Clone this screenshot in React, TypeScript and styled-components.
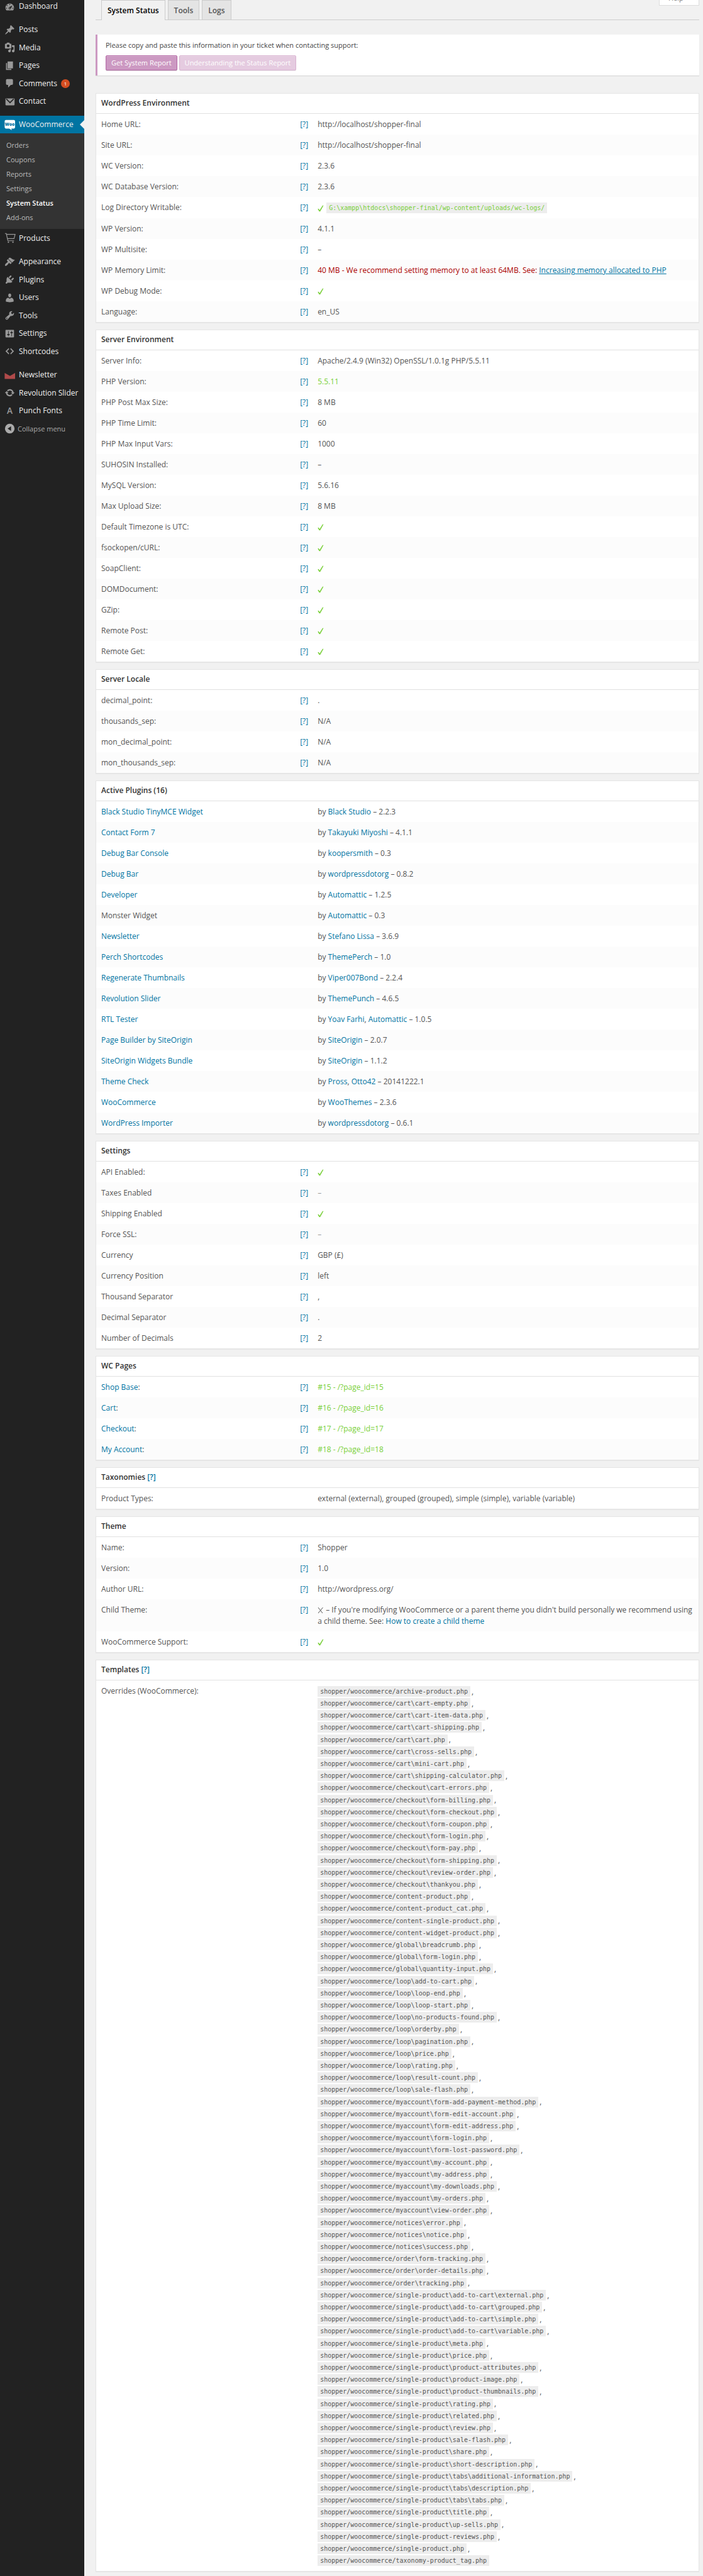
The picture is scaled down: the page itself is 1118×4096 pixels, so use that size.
import React from "react";
import styled, { createGlobalStyle } from "styled-components";

const SANS = '"Open Sans", "Noto Sans", sans-serif';
const MONO = '"DejaVu Sans Mono", "Liberation Mono", monospace';

const GlobalStyle = createGlobalStyle`
  *, *::before, *::after { box-sizing: border-box; }
  body {
    margin: 0;
    background: #f1f1f1;
    color: #444;
    font: 11px/18px ${SANS};
  }
  a { color: #0074a2; text-decoration: none; }
`;

/* ---------- frame ---------- */

const Page = styled.div`
  display: flex;
  align-items: stretch;
  min-height: 100vh;
`;

const Sidebar = styled.nav`
  flex: 0 0 134px;
  background: #222;
  overflow: hidden;
`;

const MenuStack = styled.div`
  display: flex;
  flex-direction: column;
  gap: 9px;
  margin-top: -4px;
`;

const MenuGroup = styled.ul`
  list-style: none;
  margin: 0;
  padding: 0;
`;

const MenuItem = styled.li`
  &:nth-child(even) > a { height: 29px; }
`;

const MenuLink = styled.a<{ $current?: boolean }>`
  position: relative;
  display: flex;
  align-items: center;
  gap: 6px;
  height: 28px;
  padding-left: 7px;
  font-size: 12px;
  line-height: 16px;
  color: #eee;
  background: ${(p) => (p.$current ? "#0074a2" : "transparent")};
  svg { flex: none; overflow: visible; color: ${(p) => (p.$current ? "#fff" : "#999")}; }
`;

const CurrentArrow = styled.span`
  position: absolute;
  right: 0;
  top: 7px;
  border: 7px solid transparent;
  border-left: 0;
  border-right-color: #f1f1f1;
`;

const Bubble = styled.span`
  min-width: 14px;
  height: 14px;
  border-radius: 7px;
  background: #d54e21;
  color: #fff;
  font-size: 8px;
  line-height: 14px;
  text-align: center;
`;

const SubMenu = styled.ul`
  list-style: none;
  margin: 0;
  padding: 7px 0;
  background: #333;
`;

const SubLink = styled.a<{ $current?: boolean }>`
  display: block;
  padding-left: 10px;
  font-size: 11px;
  line-height: 23px;
  color: ${(p) => (p.$current ? "#fff" : "#bbb")};
  font-weight: ${(p) => (p.$current ? 600 : 400)};
`;

const CollapseButton = styled.button`
  display: flex;
  align-items: center;
  gap: 4px;
  width: 100%;
  height: 29px;
  padding: 0 0 0 7px;
  border: 0;
  background: none;
  color: #aaa;
  font: 11px/16px ${SANS};
  cursor: pointer;
`;

const Content = styled.main`
  flex: 1;
  min-width: 0;
  padding: 0 6px 7px 18px;
`;

/* ---------- top of the page ---------- */

const TopBar = styled.header`
  display: flex;
  justify-content: space-between;
  align-items: flex-start;
  height: 32px;
  padding-left: 9px;
  border-bottom: 1px solid #ccc;
`;

const Tabs = styled.div`
  display: flex;
  gap: 4px;
`;

const Tab = styled.a<{ $active?: boolean }>`
  height: ${(p) => (p.$active ? 32 : 31)}px;
  padding: 0 9px;
  border: 1px solid #ccc;
  border-bottom: 0;
  background: ${(p) => (p.$active ? "#f1f1f1" : "#e4e4e4")};
  color: ${(p) => (p.$active ? "#000" : "#555")};
  font-size: 12px;
  font-weight: 600;
  line-height: 31px;
`;

const HelpTab = styled.button`
  display: flex;
  align-items: flex-end;
  width: 64px;
  height: 9px;
  padding: 0 0 4px 14px;
  border: 1px solid #ddd;
  border-top: 0;
  background: #fff;
  color: #777;
  font: 11px/14px ${SANS};
`;

const Notice = styled.section`
  margin: 23px 0 28px;
  padding: 8px 13px;
  border-left: 3px solid #cc99c2;
  background: #fff;
  box-shadow: 0 1px 1px rgba(0, 0, 0, 0.1);
`;

const NoticeText = styled.p`
  margin: 0 0 7px;
`;

const ButtonRow = styled.div`
  display: flex;
  gap: 3px;
`;

const ActionButton = styled.button<{ $faded?: boolean }>`
  height: 24px;
  padding: 0 8px;
  border: 1px solid #b366a4;
  border-radius: 2px;
  background: #cc99c2;
  box-shadow: inset 0 1px 0 rgba(255, 255, 255, 0.25), 0 1px 0 rgba(0, 0, 0, 0.15);
  color: #fff;
  font: 11px/20px ${SANS};
  opacity: ${(p) => (p.$faded ? 0.5 : 1)};
`;

/* ---------- report tables ---------- */

const Report = styled.table`
  width: 100%;
  margin-bottom: 11px;
  table-layout: fixed;
  border: 1px solid #e5e5e5;
  border-collapse: separate;
  border-spacing: 0;
  background: #fff;
  box-shadow: 0 1px 1px rgba(0, 0, 0, 0.04);
  font-size: 12px;
  &:last-child { margin-bottom: 0; }
`;

const LabelCol = styled.col`
  width: 33%;
`;

const HelpCol = styled.col`
  width: 28px;
`;

const Heading = styled.th`
  padding: 6px 8px 7px;
  border-bottom: 1px solid #e1e1e1;
  color: #333;
  font-weight: 600;
  line-height: 18px;
  text-align: left;
`;

const Row = styled.tr`
  &:nth-child(even) { background: #fcfcfc; }
`;

const Cell = styled.td`
  padding: 8px 8px 7px;
  vertical-align: top;
  color: #555;
`;

const Code = styled.code`
  padding: 0 4px;
  background: #ededed;
  font: 10px/17px ${MONO};
`;

const CodeLine = styled.div`
  display: flex;
  align-items: center;
  gap: 4px;
  height: 19px;
`;

const TemplateList = styled.ul`
  list-style: none;
  margin: 0;
  padding: 0;
  li { display: flex; align-items: center; gap: 2px; height: 19px; }
  li:nth-child(5n) { height: 20px; }
`;

const Good = styled.span`
  color: #7ad03a;
`;

const Bad = styled.span`
  color: #a00;
  a { text-decoration: underline; }
`;

const Muted = styled.span`
  color: #999;
`;

const Mark = styled.svg`
  display: inline-block;
  vertical-align: middle;
`;

/* ---------- drawings ---------- */

const ICONS: Record<string, React.ReactNode> = {
  dashboard: (
    <path d="M3.76 17.01h12.48C17.34 15.63 18 13.9 18 12c0-4.41-3.58-8-8-8s-8 3.59-8 8c0 1.9.66 3.63 1.76 5.01zM9 6c0-.55.45-1 1-1s1 .45 1 1c0 .56-.45 1-1 1s-1-.44-1-1zM4 8c0-.55.45-1 1-1s1 .45 1 1c0 .56-.45 1-1 1s-1-.44-1-1zm4.52 3.4c.84-.83 6.51-3.5 6.51-3.5s-2.66 5.68-3.49 6.51c-.84.84-2.18.84-3.02 0-.83-.83-.83-2.18 0-3.01zM3 13c0-.55.45-1 1-1s1 .45 1 1c0 .56-.45 1-1 1s-1-.44-1-1zm6 0c0-.55.45-1 1-1s1 .45 1 1c0 .56-.45 1-1 1s-1-.44-1-1zm6 0c0-.55.45-1 1-1s1 .45 1 1c0 .56-.45 1-1 1s-1-.44-1-1z" />
  ),
  post: (
    <path d="M10.44 3.02l1.82-1.82 6.36 6.35-1.83 1.82c-1.05-.68-2.48-.57-3.41.36l-.75.75c-.92.93-1.04 2.35-.35 3.41l-1.83 1.82-2.41-2.41-2.8 2.79c-.42.42-3.38 2.71-3.8 2.29s1.86-3.39 2.28-3.81l2.79-2.79L4.1 9.36l1.83-1.82c1.05.69 2.48.57 3.4-.36l.75-.75c.93-.92 1.05-2.35.36-3.41z" />
  ),
  media: (
    <path
      fillRule="evenodd"
      d="M13 11V4c0-.55-.45-1-1-1h-1.67L9 1H5L3.67 3H2c-.55 0-1 .45-1 1v7c0 .55.45 1 1 1h10c.55 0 1-.45 1-1zM7 4.5c1.38 0 2.5 1.12 2.5 2.5S8.38 9.5 7 9.5 4.5 8.38 4.5 7 5.62 4.5 7 4.5zM14 6h5v10.5c0 1.38-1.12 2.5-2.5 2.5S14 17.88 14 16.5s1.12-2.5 2.5-2.5c.17 0 .34.02.5.05V9h-3V6zm-4 8.05V13h2v3.5c0 1.38-1.12 2.5-2.5 2.5S7 17.88 7 16.5 8.12 14 9.5 14c.17 0 .34.02.5.05z"
    />
  ),
  page: <path d="M6 15V2h10v13H6zm-1 1h8v2H3V5h2v11z" />,
  comments: (
    <path d="M5 2h9c1.1 0 2 .9 2 2v7c0 1.1-.9 2-2 2h-2l-5 5v-5H5c-1.1 0-2-.9-2-2V4c0-1.1.9-2 2-2z" />
  ),
  email: (
    <>
      <path d="M3 4h15c.55 0 1 .45 1 1v11c0 .55-.45 1-1 1H3c-.55 0-1-.45-1-1V5c0-.55.45-1 1-1z" />
      <path d="M3.500 5L10.500 12L17.500 5" fill="none" stroke="#222" strokeWidth="2" />
    </>
  ),
  woo: (
    <>
      <path d="M3 1h14.500C18.900 1 20 2.100 20 3.500v11c0 1.400-1.100 2.500-2.500 2.500H13l1 3-5-3H3C1.600 17 .5 15.900.5 14.500v-11C.5 2.100 1.600 1 3 1z" />
      <text
        x="10"
        y="12"
        textAnchor="middle"
        fontFamily={SANS}
        fontSize="8"
        fontWeight="800"
        fill="#0074a2"
      >
        Woo
      </text>
    </>
  ),
  cart: (
    <>
      <path
        d="M1 1.500h2.500L6.500 15H18M4 3h16L18 11H6"
        fill="none"
        stroke="currentColor"
        strokeWidth="1.400"
      />
      <circle cx="7.500" cy="17.800" r="1.300" />
      <circle cx="16" cy="17.800" r="1.300" />
    </>
  ),
  appearance: (
    <path d="M14.48 11.06L7.41 3.99l1.5-1.5c.5-.56 2.3-.47 3.51.32 1.21.8 1.43 1.28 2.91 2.1 1.18.64 2.45 1.26 4.45.85zm-.71.71L6.7 4.7 4.93 6.47c-.39.39-.39 1.02 0 1.41l1.06 1.06c.39.39.39 1.03 0 1.42-.6.6-1.43 1.11-2.21 1.69-.35.26-.7.53-1.01.84C1.43 14.23.4 16.08 1.4 17.07c.99 1 2.84-.03 4.18-1.36.31-.31.58-.66.85-1.02.57-.78 1.08-1.61 1.69-2.21.39-.39 1.02-.39 1.41 0l1.06 1.06c.39.39 1.02.39 1.41 0z" />
  ),
  plugins: (
    <path d="M13.11 4.36L9.87 7.6 8 5.73l3.24-3.24c.35-.34 1.05-.2 1.56.32.52.51.66 1.21.31 1.55zm-8 1.77l.91-1.12 9.01 9.01-1.19.84c-.71.71-2.63 1.16-3.82 1.16H6.14L4.9 17.26c-.59.59-1.54.59-2.12 0-.59-.58-.59-1.53 0-2.12l1.24-1.24v-3.88c0-1.13.4-3.19 1.09-3.89zm7.26 3.97l3.24-3.24c.34-.35 1.04-.21 1.55.31.52.51.66 1.21.31 1.55l-3.24 3.25z" />
  ),
  users: (
    <path d="M10 9.25c-2.27 0-2.73-3.44-2.73-3.44C7 4.02 7.82 2 9.97 2c2.16 0 2.98 2.02 2.71 3.81 0 0-.41 3.44-2.68 3.44zm0 2.57L12.72 10c2.39 0 4.52 2.33 4.52 4.53v2.49s-3.65 1.13-7.24 1.13c-3.65 0-7.24-1.13-7.24-1.13v-2.49c0-2.25 1.94-4.48 4.47-4.48z" />
  ),
  tools: (
    <path d="M16.68 9.77c-1.34 1.34-3.3 1.67-4.95.99l-5.41 6.52c-.99.99-2.59.99-3.58 0s-.99-2.59 0-3.57l6.52-5.42c-.68-1.65-.35-3.61.99-4.95 1.28-1.28 3.12-1.62 4.72-1.06l-2.89 2.89 2.82 2.82 2.86-2.87c.53 1.58.18 3.39-1.08 4.65zM3.81 16.21c.4.39 1.04.39 1.43 0 .4-.4.4-1.04 0-1.43-.39-.4-1.03-.4-1.43 0-.39.39-.39 1.03 0 1.43z" />
  ),
  settings: (
    <path d="M18 16V4c0-.55-.45-1-1-1H3c-.55 0-1 .45-1 1v12c0 .55.45 1 1 1h14c.55 0 1-.45 1-1zM8 11h1c.55 0 1 .45 1 1s-.45 1-1 1H8v1.5c0 .28-.22.5-.5.5s-.5-.22-.5-.5V13H6c-.55 0-1-.45-1-1s.45-1 1-1h1V5.5c0-.28.22-.5.5-.5s.5.22.5.5V11zm5-2h-1c-.55 0-1-.45-1-1s.45-1 1-1h1V5.5c0-.28.22-.5.5-.5s.5.22.5.5V7h1c.55 0 1 .45 1 1s-.45 1-1 1h-1v5.5c0 .28-.22.5-.5.5s-.5-.22-.5-.5V9z" />
  ),
  code: <path d="M9 6l-4 4 4 4-1 2-6-6 6-6zm2 8l4-4-4-4 1-2 6 6-6 6z" />,
  newsletter: <path d="M0.500 6l10 5.500L20 6v11H.5z" fill="#b04a4a" />,
  update: (
    <path d="M10.2 3.28c3.53 0 6.43 2.61 6.92 6h2.08l-3.5 4-3.5-4h2.32c-.45-1.97-2.21-3.45-4.32-3.45-1.45 0-2.73.71-3.54 1.78L4.95 5.66C6.23 4.2 8.11 3.28 10.2 3.28zm-.4 13.44c-3.52 0-6.43-2.61-6.92-6H.8l3.5-4c1.17 1.33 2.33 2.67 3.5 4H5.48c.45 1.97 2.21 3.45 4.32 3.45 1.45 0 2.73-.71 3.54-1.78l1.71 1.95c-1.28 1.46-3.15 2.38-5.25 2.38z" />
  ),
  font: (
    <text x="10" y="15" textAnchor="middle" fontFamily={SANS} fontSize="16" fontWeight="600">
      A
    </text>
  ),
  collapse: (
    <path
      fillRule="evenodd"
      d="M10 1a9 9 0 1 0 0 18 9 9 0 0 0 0-18zM12.500 5.500v9L6 10z"
    />
  ),
};

const Icon = ({ name }: { name: string }) => (
  <svg width="17" height="17" viewBox="0 0 20 20" fill="currentColor" aria-hidden="true">
    {ICONS[name]}
  </svg>
);

const Tick = () => (
  <Good>
    <Mark width="10" height="11" viewBox="0 0 10 11" role="img" aria-label="Yes">
      <path d="M0.300 6.500L1.800 5.800L3.300 8.200L8 0.800H9.500L4.200 10.300H2.700z" fill="currentColor" />
    </Mark>
  </Good>
);

const Cross = () => (
  <Mark width="10" height="11" viewBox="0 0 10 11" role="img" aria-label="No">
    <path d="M1 1l7 9M8.500 1L1 10" fill="none" stroke="currentColor" />
  </Mark>
);

/* ---------- data ---------- */

type Entry = { label: React.ReactNode; value: React.ReactNode; help?: boolean };

const row = (label: React.ReactNode, value: React.ReactNode, help = true): Entry => ({
  label,
  value,
  help,
});

const MENU_TOP = [["dashboard", "Dashboard"]];
const MENU_CONTENT = [
  ["post", "Posts"],
  ["media", "Media"],
  ["page", "Pages"],
  ["comments", "Comments"],
  ["email", "Contact"],
];
const MENU_ADMIN = [
  ["appearance", "Appearance"],
  ["plugins", "Plugins"],
  ["users", "Users"],
  ["tools", "Tools"],
  ["settings", "Settings"],
  ["code", "Shortcodes"],
];
const MENU_EXTRA = [
  ["newsletter", "Newsletter"],
  ["update", "Revolution Slider"],
  ["font", "Punch Fonts"],
];
const SUBMENU = ["Orders", "Coupons", "Reports", "Settings", "System Status", "Add-ons"];

const WORDPRESS = [
  row("Home URL:", "http://localhost/shopper-final"),
  row("Site URL:", "http://localhost/shopper-final"),
  row("WC Version:", "2.3.6"),
  row("WC Database Version:", "2.3.6"),
  row(
    "Log Directory Writable:",
    <CodeLine>
      <Tick />
      <Good as={Code}>G:\xampp\htdocs\shopper-final/wp-content/uploads/wc-logs/</Good>
    </CodeLine>
  ),
  row("WP Version:", "4.1.1"),
  row("WP Multisite:", "–"),
  row(
    "WP Memory Limit:",
    <Bad>
      40 MB - We recommend setting memory to at least 64MB. See:{" "}
      <a href="#memory">Increasing memory allocated to PHP</a>
    </Bad>
  ),
  row("WP Debug Mode:", <Tick />),
  row("Language:", "en_US"),
];

const SERVER = [
  row("Server Info:", "Apache/2.4.9 (Win32) OpenSSL/1.0.1g PHP/5.5.11"),
  row("PHP Version:", <Good>5.5.11</Good>),
  row("PHP Post Max Size:", "8 MB"),
  row("PHP Time Limit:", "60"),
  row("PHP Max Input Vars:", "1000"),
  row("SUHOSIN Installed:", "–"),
  row("MySQL Version:", "5.6.16"),
  row("Max Upload Size:", "8 MB"),
  row("Default Timezone is UTC:", <Tick />),
  row("fsockopen/cURL:", <Tick />),
  row("SoapClient:", <Tick />),
  row("DOMDocument:", <Tick />),
  row("GZip:", <Tick />),
  row("Remote Post:", <Tick />),
  row("Remote Get:", <Tick />),
];

const LOCALE = [
  row("decimal_point:", "."),
  row("thousands_sep:", "N/A"),
  row("mon_decimal_point:", "N/A"),
  row("mon_thousands_sep:", "N/A"),
];

const PLUGIN_DATA: [string, string[], string][] = [
  ["Black Studio TinyMCE Widget", ["Black Studio"], "2.2.3"],
  ["Contact Form 7", ["Takayuki Miyoshi"], "4.1.1"],
  ["Debug Bar Console", ["koopersmith"], "0.3"],
  ["Debug Bar", ["wordpressdotorg"], "0.8.2"],
  ["Developer", ["Automattic"], "1.2.5"],
  ["Monster Widget", ["Automattic"], "0.3"],
  ["Newsletter", ["Stefano Lissa"], "3.6.9"],
  ["Perch Shortcodes", ["ThemePerch"], "1.0"],
  ["Regenerate Thumbnails", ["Viper007Bond"], "2.2.4"],
  ["Revolution Slider", ["ThemePunch"], "4.6.5"],
  ["RTL Tester", ["Yoav Farhi", "Automattic"], "1.0.5"],
  ["Page Builder by SiteOrigin", ["SiteOrigin"], "2.0.7"],
  ["SiteOrigin Widgets Bundle", ["SiteOrigin"], "1.1.2"],
  ["Theme Check", ["Pross", "Otto42"], "20141222.1"],
  ["WooCommerce", ["WooThemes"], "2.3.6"],
  ["WordPress Importer", ["wordpressdotorg"], "0.6.1"],
];

const PLUGINS = PLUGIN_DATA.map(([name, authors, version]) =>
  row(
    name === "Monster Widget" ? name : <a href="#plugin">{name}</a>,
    <>
      by{" "}
      {authors.map((author, i) => (
        <React.Fragment key={author}>
          {i > 0 && ", "}
          <a href="#author">{author}</a>
        </React.Fragment>
      ))}{" "}
      – {version}
    </>,
    false
  )
);

const SETTINGS = [
  row("API Enabled:", <Tick />),
  row("Taxes Enabled", <Muted>–</Muted>),
  row("Shipping Enabled", <Tick />),
  row("Force SSL:", <Muted>–</Muted>),
  row("Currency", "GBP (£)"),
  row("Currency Position", "left"),
  row("Thousand Separator", ","),
  row("Decimal Separator", "."),
  row("Number of Decimals", "2"),
];

const PAGES = (
  [
    ["Shop Base", 15],
    ["Cart", 16],
    ["Checkout", 17],
    ["My Account", 18],
  ] as [string, number][]
).map(([name, id]) =>
  row(
    <>
      <a href="#page">{name}</a>:
    </>,
    <Good>{`#${id} - /?page_id=${id}`}</Good>
  )
);

const TAXONOMIES = [
  row(
    "Product Types:",
    "external (external), grouped (grouped), simple (simple), variable (variable)",
    false
  ),
];

const THEME = [
  row("Name:", "Shopper"),
  row("Version:", "1.0"),
  row("Author URL:", "http://wordpress.org/"),
  row(
    "Child Theme:",
    <>
      <Cross /> – If you're modifying WooCommerce or a parent theme you didn't build personally we
      recommend using a child theme. See: <a href="#child">How to create a child theme</a>
    </>
  ),
  row("WooCommerce Support:", <Tick />),
];

const TEMPLATE_FILES: [string, string[]][] = [
  ["", ["archive-product"]],
  [
    "cart\\",
    ["cart-empty", "cart-item-data", "cart-shipping", "cart", "cross-sells", "mini-cart", "shipping-calculator"],
  ],
  [
    "checkout\\",
    [
      "cart-errors",
      "form-billing",
      "form-checkout",
      "form-coupon",
      "form-login",
      "form-pay",
      "form-shipping",
      "review-order",
      "thankyou",
    ],
  ],
  ["", ["content-product", "content-product_cat", "content-single-product", "content-widget-product"]],
  ["global\\", ["breadcrumb", "form-login", "quantity-input"]],
  [
    "loop\\",
    [
      "add-to-cart",
      "loop-end",
      "loop-start",
      "no-products-found",
      "orderby",
      "pagination",
      "price",
      "rating",
      "result-count",
      "sale-flash",
    ],
  ],
  [
    "myaccount\\",
    [
      "form-add-payment-method",
      "form-edit-account",
      "form-edit-address",
      "form-login",
      "form-lost-password",
      "my-account",
      "my-address",
      "my-downloads",
      "my-orders",
      "view-order",
    ],
  ],
  ["notices\\", ["error", "notice", "success"]],
  ["order\\", ["form-tracking", "order-details", "tracking"]],
  [
    "single-product\\",
    [
      "add-to-cart\\external",
      "add-to-cart\\grouped",
      "add-to-cart\\simple",
      "add-to-cart\\variable",
      "meta",
      "price",
      "product-attributes",
      "product-image",
      "product-thumbnails",
      "rating",
      "related",
      "review",
      "sale-flash",
      "share",
      "short-description",
      "tabs\\additional-information",
      "tabs\\description",
      "tabs\\tabs",
      "title",
      "up-sells",
    ],
  ],
  ["", ["single-product-reviews", "single-product", "taxonomy-product_tag"]],
];

const TEMPLATE_PATHS = TEMPLATE_FILES.flatMap(([dir, files]) =>
  files.map((file) => `shopper/woocommerce/${dir}${file}.php`)
);

const TEMPLATES = [
  row(
    "Overrides (WooCommerce):",
    <TemplateList>
      {TEMPLATE_PATHS.map((path, i) => (
        <li key={path}>
          <Code>{path}</Code>
          {i < TEMPLATE_PATHS.length - 1 && ","}
        </li>
      ))}
    </TemplateList>,
    false
  ),
];

/* ---------- composition ---------- */

const HelpLink = () => (
  <a href="#help" aria-label="Help">
    [?]
  </a>
);

const Section = ({ title, rows, help }: { title: string; rows: Entry[]; help?: boolean }) => (
  <Report>
    <colgroup>
      <LabelCol />
      <HelpCol />
      <col />
    </colgroup>
    <thead>
      <tr>
        <Heading colSpan={3}>
          {title}
          {help && (
            <>
              {" "}
              <HelpLink />
            </>
          )}
        </Heading>
      </tr>
    </thead>
    <tbody>
      {rows.map((entry, i) => (
        <Row key={i}>
          <Cell>{entry.label}</Cell>
          <Cell>{entry.help && <HelpLink />}</Cell>
          <Cell>{entry.value}</Cell>
        </Row>
      ))}
    </tbody>
  </Report>
);

const Menu = ({ items }: { items: string[][] }) => (
  <MenuGroup>
    {items.map(([icon, label]) => (
      <MenuItem key={label}>
        <MenuLink href="#menu">
          <Icon name={icon} />
          {label}
          {label === "Comments" && <Bubble>1</Bubble>}
        </MenuLink>
      </MenuItem>
    ))}
  </MenuGroup>
);

export default function App() {
  return (
    <>
      <GlobalStyle />
      <Page>
        <Sidebar>
          <MenuStack>
            <Menu items={MENU_TOP} />
            <Menu items={MENU_CONTENT} />
            <MenuGroup>
              <li>
                <MenuLink href="#woocommerce" $current>
                  <Icon name="woo" />
                  WooCommerce
                  <CurrentArrow />
                </MenuLink>
                <SubMenu>
                  {SUBMENU.map((label) => (
                    <li key={label}>
                      <SubLink href="#submenu" $current={label === "System Status"}>
                        {label}
                      </SubLink>
                    </li>
                  ))}
                </SubMenu>
              </li>
              <MenuItem>
                <MenuLink href="#products">
                  <Icon name="cart" />
                  Products
                </MenuLink>
              </MenuItem>
            </MenuGroup>
            <Menu items={MENU_ADMIN} />
            <div>
              <Menu items={MENU_EXTRA} />
              <CollapseButton type="button">
                <Icon name="collapse" />
                Collapse menu
              </CollapseButton>
            </div>
          </MenuStack>
        </Sidebar>
        <Content>
          <TopBar>
            <Tabs>
              <Tab href="#status" $active>
                System Status
              </Tab>
              <Tab href="#tools">Tools</Tab>
              <Tab href="#logs">Logs</Tab>
            </Tabs>
            <HelpTab type="button">Help</HelpTab>
          </TopBar>
          <Notice>
            <NoticeText>
              Please copy and paste this information in your ticket when contacting support:
            </NoticeText>
            <ButtonRow>
              <ActionButton type="button">Get System Report</ActionButton>
              <ActionButton type="button" $faded>
                Understanding the Status Report
              </ActionButton>
            </ButtonRow>
          </Notice>
          <Section title="WordPress Environment" rows={WORDPRESS} />
          <Section title="Server Environment" rows={SERVER} />
          <Section title="Server Locale" rows={LOCALE} />
          <Section title="Active Plugins (16)" rows={PLUGINS} />
          <Section title="Settings" rows={SETTINGS} />
          <Section title="WC Pages" rows={PAGES} />
          <Section title="Taxonomies" rows={TAXONOMIES} help />
          <Section title="Theme" rows={THEME} />
          <Section title="Templates" rows={TEMPLATES} help />
        </Content>
      </Page>
    </>
  );
}
